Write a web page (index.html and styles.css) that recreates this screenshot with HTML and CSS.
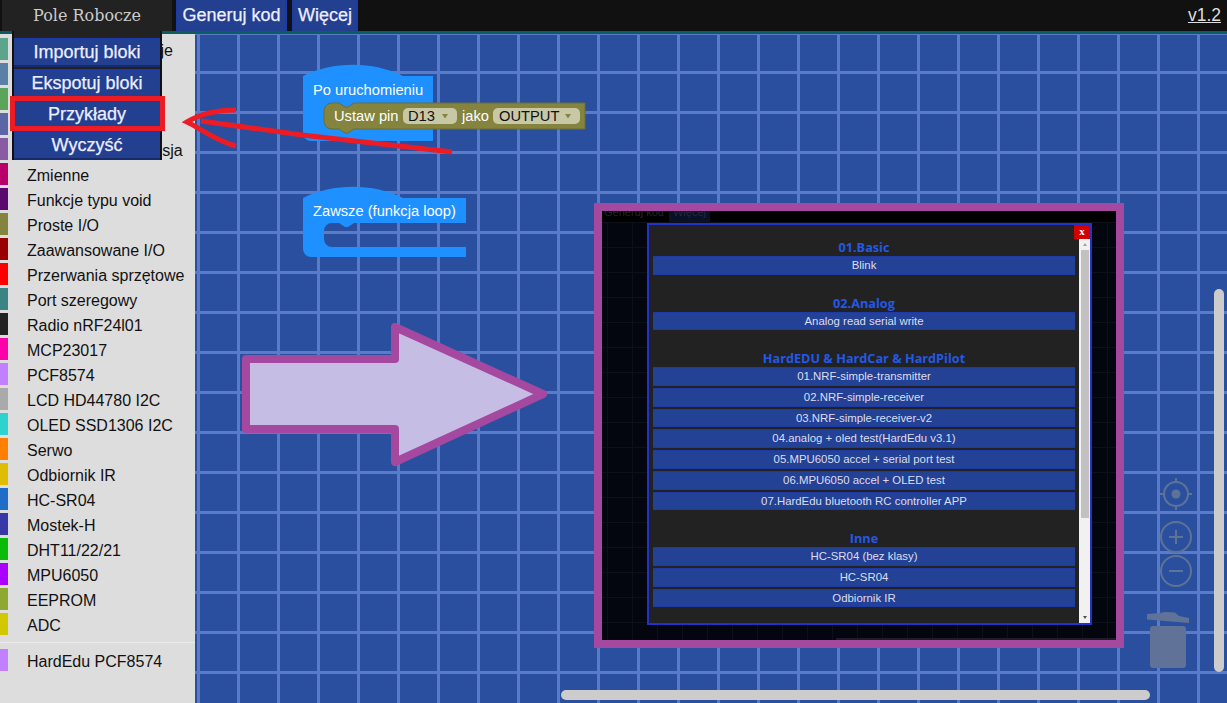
FILE: index.html
```html
<!DOCTYPE html>
<html lang="pl">
<head>
<meta charset="utf-8">
<title>Pole Robocze</title>
<link rel="stylesheet" href="styles.css">
</head>
<body>
<div class="page">
  <header class="topbar">
    <div class="tab-main">Pole Robocze</div>
    <div class="tab">Generuj kod</div>
    <div class="tab tab-more">Więcej</div>
    <a class="version">v1.2</a>
  </header>
  <main class="main">
    <aside class="sidebar">
      <div class="cat"><i class="sw c0"></i>Podstawowe funkcje</div>
      <div class="cat"><i class="sw c1"></i>Logika</div>
      <div class="cat"><i class="sw c2"></i>Pętle</div>
      <div class="cat"><i class="sw c3"></i>Matematyka</div>
      <div class="cat"><i class="sw c4"></i>Łańcuchy i Konwersja</div>
      <div class="cat"><i class="sw c5"></i>Zmienne</div>
      <div class="cat"><i class="sw c6"></i>Funkcje typu void</div>
      <div class="cat"><i class="sw c7"></i>Proste I/O</div>
      <div class="cat"><i class="sw c8"></i>Zaawansowane I/O</div>
      <div class="cat"><i class="sw c9"></i>Przerwania sprzętowe</div>
      <div class="cat"><i class="sw c10"></i>Port szeregowy</div>
      <div class="cat"><i class="sw c11"></i>Radio nRF24l01</div>
      <div class="cat"><i class="sw c12"></i>MCP23017</div>
      <div class="cat"><i class="sw c13"></i>PCF8574</div>
      <div class="cat"><i class="sw c14"></i>LCD HD44780 I2C</div>
      <div class="cat"><i class="sw c15"></i>OLED SSD1306 I2C</div>
      <div class="cat"><i class="sw c16"></i>Serwo</div>
      <div class="cat"><i class="sw c17"></i>Odbiornik IR</div>
      <div class="cat"><i class="sw c18"></i>HC-SR04</div>
      <div class="cat"><i class="sw c19"></i>Mostek-H</div>
      <div class="cat"><i class="sw c20"></i>DHT11/22/21</div>
      <div class="cat"><i class="sw c21"></i>MPU6050</div>
      <div class="cat"><i class="sw c22"></i>EEPROM</div>
      <div class="cat"><i class="sw c23"></i>ADC</div>
      <div class="sep"></div>
      <div class="cat"><i class="sw c13"></i>HardEdu PCF8574</div>
    </aside>
    <section class="workspace"></section>
  </main>

  <nav class="menu">
    <div class="menu-item">Importuj bloki</div>
    <div class="menu-item">Ekspotuj bloki</div>
    <div class="menu-item">Przykłady</div>
    <div class="menu-item">Wyczyść</div>
  </nav>

  <svg class="canvas" width="1227" height="703" viewBox="0 0 1227 703">
    <path class="blk-blue" d="M303 76c30-15 70-15 100 0H433V131H433V141H311a8 8 0 0 1-8-8Z"/>
    <text class="blk-t" x="313" y="95">Po uruchomieniu</text>
    <path class="blk-olive" d="M332 103h7l6 4h3l6-4H585V129H354l-6 4h-3l-6-4h-7a8 8 0 0 1-8-8v-10a8 8 0 0 1 8-8Z"/>
    <text class="blk-t" x="334" y="121">Ustaw pin</text>
    <rect class="fld" x="403" y="108" width="54" height="16" rx="5"/>
    <text class="fld-t" x="408" y="121">D13</text>
    <path class="fld-a" d="M442 114h6l-3 4.5Z"/>
    <text class="blk-t" x="462" y="121">jako</text>
    <rect class="fld" x="493" y="108" width="87" height="16" rx="5"/>
    <text class="fld-t" x="499" y="121">OUTPUT</text>
    <path class="fld-a" d="M565 114h6l-3 4.5Z"/>

    <path class="blk-blue" d="M303 198c30-15 70-15 100 0H466V223H354l-6 4h-3l-6-4h-7a8 8 0 0 0-8 8v8a8 8 0 0 0 8 8H466V257H311a8 8 0 0 1-8-8Z"/>
    <text class="blk-t" x="313" y="216">Zawsze (funkcja loop)</text>

    <g class="ctl">
      <circle cx="1176" cy="494" r="12"/>
      <circle class="ctl-fill" cx="1176" cy="494" r="4.5"/>
      <path d="M1176 478v5M1176 505v5M1160 494h5M1187 494h5"/>
      <circle cx="1176" cy="537" r="15"/>
      <path d="M1176 530v14M1169 537h14"/>
      <circle cx="1176" cy="571" r="15"/>
      <path d="M1169 571h14"/>
    </g>
    <g class="trash">
      <rect x="1150" y="626" width="36" height="42" rx="3"/>
      <path d="M1147 614L1160 613L1165 612L1175 612.5L1179 616L1189 618V623L1147 619.5Z"/>
    </g>

    <path class="arrow-purple" d="M246 359H395V327L543 394 395 462V429H246Z"/>

    <rect class="red-box" x="12.5" y="98.5" width="150" height="30"/>
    <path class="red-line" d="M236 110C215 110 200 114 187 122C200 128 215 141 236 146"/>
    <path class="red-line" d="M201 121L302 135L452 152"/>
  </svg>

  <div class="shot">
    <div class="shot-bar"><span class="ghost">Generuj kod</span><span class="ghost ghost-b">Więcej</span></div>
    <div class="shot-hbar"></div>
    <div class="dialog">
      <div class="dialog-body">
        <h3 class="head">01.Basic</h3>
        <div class="ex">Blink</div>
        <h3 class="head head-s">02.Analog</h3>
        <div class="ex">Analog read serial write</div>
        <h3 class="head head-s">HardEDU &amp; HardCar &amp; HardPilot</h3>
        <div class="ex">01.NRF-simple-transmitter</div>
        <div class="ex">02.NRF-simple-receiver</div>
        <div class="ex">03.NRF-simple-receiver-v2</div>
        <div class="ex">04.analog + oled test(HardEdu v3.1)</div>
        <div class="ex">05.MPU6050 accel + serial port test</div>
        <div class="ex">06.MPU6050 accel + OLED test</div>
        <div class="ex">07.HardEdu bluetooth RC controller APP</div>
        <h3 class="head head-s">Inne</h3>
        <div class="ex">HC-SR04 (bez klasy)</div>
        <div class="ex">HC-SR04</div>
        <div class="ex">Odbiornik IR</div>
      </div>
      <div class="sbar">
        <div class="sbar-up"></div>
        <div class="sbar-thumb"></div>
        <div class="sbar-down"></div>
      </div>
      <div class="close">x</div>
    </div>
  </div>

  <div class="scroll-v"></div>
  <div class="scroll-h"></div>
</div>
</body>
</html>
```

FILE: styles.css
```css
* { box-sizing: border-box; }
html, body { margin: 0; height: 100%; overflow: hidden; }
body { font-family: "Liberation Sans", Arial, sans-serif; background: #2a4f9e; }
.page { position: relative; width: 1227px; height: 703px; display: flex; flex-direction: column; overflow: hidden; }

.topbar { height: 34px; flex: none; display: flex; background: #111; border-bottom: 3px solid #0b5e60; color: #eef; }
.tab-main { width: 170px; margin-left: 2px; background: #222; color: #ccc; font-family: "DejaVu Serif", serif; font-size: 16px; text-align: center; line-height: 31px; }
.tab { margin-left: 4px; width: 111px; background: #223f90; border-left: 2px solid #1c3aa8; border-right: 2px solid #1c3aa8; font-size: 18px; line-height: 30px; text-align: center; -webkit-text-stroke: .25px #eef; }
.tab-more { width: 66px; margin-left: 5px; }
.version { margin-left: auto; margin-right: 6px; color: #ddd; font-size: 17.5px; line-height: 31px; text-decoration: underline; }

.main { flex: 1; display: flex; min-height: 0; }
.sidebar { width: 195px; flex: none; background: #ddd; padding-top: 4px; font-size: 16px; color: #111; }
.cat { height: 25px; display: flex; align-items: flex-start; line-height: 25px; white-space: nowrap; overflow: hidden; }
.sw { width: 8px; height: 22px; margin-right: 19px; flex: none; }
.sep { height: 1px; background: #ebebeb; margin: 4px 0 6px; }
.c0 { background: #5ba58c; } .c1 { background: #5b80a5; } .c2 { background: #5ba55b; } .c3 { background: #5b67a5; }
.c4 { background: #8a5ba5; } .c5 { background: #b8006b; } .c6 { background: #5a0a6e; } .c7 { background: #84843e; }
.c8 { background: #990000; } .c9 { background: #ff0000; } .c10 { background: #3a8583; } .c11 { background: #222; }
.c12 { background: #ff00aa; } .c13 { background: #c080ff; } .c14 { background: #aaa; } .c15 { background: #2ed3cd; }
.c16 { background: #ff8000; } .c17 { background: #dfbd00; } .c18 { background: #1e6ec8; } .c19 { background: #3838a8; }
.c20 { background: #08bc08; } .c21 { background: #aa00ff; } .c22 { background: #8ea832; } .c23 { background: #d2c800; }

.workspace { flex: 1; border-top: 1px solid #5a7cc8; background-color: #2a4f9e;
  background-image: linear-gradient(90deg, transparent 2px, #5a7cc8 2px, #5a7cc8 5px, transparent 5px),
                    linear-gradient(180deg, transparent 36px, #5a7cc8 36px, #5a7cc8 39px, transparent 39px);
  background-size: 40px 40px; }

.menu { position: absolute; left: 12px; top: 31px; width: 150px; height: 129px; background: #222; border: 2px solid #111; border-width: 0 2px 1px; padding-top: 7px; display: flex; flex-direction: column; gap: 2px; }
.menu-item { height: 29px; background: #223f90; border-top: 2px solid #1c3aa8; border-bottom: 2px solid #172a6a; color: #eef; font-size: 18px; line-height: 25px; text-align: center; -webkit-text-stroke: .25px #eef; }

.canvas { position: absolute; left: 0; top: 0; }
.blk-blue { fill: #1e90ff; }
.blk-olive { fill: #84843e; stroke: #6c6c33; stroke-width: 1; }
.blk-t { font-family: "Liberation Sans", sans-serif; font-size: 14.7px; fill: #fff; }
.fld { fill: #c8c8a6; }
.fld-t { font-family: "Liberation Sans", sans-serif; font-size: 14.7px; fill: #111; }
.fld-a { fill: #84843e; }
.ctl { fill: none; stroke: #5f7396; stroke-width: 2; }
.ctl-fill { fill: #5f7396; stroke: none; }
.trash { fill: #617299; }
.arrow-purple { fill: #c6bde4; stroke: #a4499f; stroke-width: 8; stroke-linejoin: round; }
.red-box { fill: none; stroke: #ed1c24; stroke-width: 5; }
.red-line { fill: none; stroke: #ed1c24; stroke-width: 5; }

.shot { position: absolute; left: 594px; top: 203px; width: 530px; height: 445px; border: 8px solid #a4499f; background-color: #03060f; overflow: hidden;
  background-image: linear-gradient(90deg, #0d1018 1px, transparent 1px), linear-gradient(180deg, #0d1018 1px, transparent 1px);
  background-size: 25px 25px; background-position: 5px 11px; }
.shot-bar { height: 11px; background: #000; overflow: hidden; font-size: 11px; line-height: 3px; color: #262626; display: flex; gap: 3px; }
.ghost { padding: 0 2px; }
.ghost-b { background: #0a1025; color: #27293a; padding: 0 4px; }
.shot-hbar { position: absolute; right: 0; bottom: 0; width: 280px; height: 2px; background: #1b1d22; }
.dialog { position: absolute; left: 45px; top: 12px; width: 445px; height: 402px; border: 2px solid #2233cc; background: #222; display: flex; }
.dialog-body { width: 430px; padding: 15px 4px 0; }
.head { margin: 0; height: 16px; font-family: "Open Sans", sans-serif; font-size: 12.7px; font-weight: 700; line-height: 15px; color: #2359e6; text-align: center; }
.head-s { margin-top: 20.75px; }
.ex { height: 18.75px; margin-bottom: 2px; background: #234296; border-top: 1px solid #1f3aa5; border-bottom: 1px solid #1f3aa5; color: #dde; font-size: 11.4px; line-height: 16.5px; text-align: center; }
.sbar { width: 11px; margin-top: 14px; background: #f1f1f1; display: flex; flex-direction: column; align-items: center; padding: 0; }
.sbar-up { width: 0; height: 0; margin-top: 4px; border: 2px solid transparent; border-top: 0; border-bottom: 3px solid #a3a3a3; }
.sbar-thumb { width: 8px; height: 268px; margin-top: 4px; background: #c1c1c1; }
.sbar-down { width: 0; height: 0; margin-top: auto; margin-bottom: 4px; border: 2px solid transparent; border-bottom: 0; border-top: 3px solid #505050; }
.close { position: absolute; right: 0; top: 0; width: 16px; height: 14px; background: #d40000; color: #fff; font-family: "Liberation Serif", serif; font-size: 11px; font-weight: 700; line-height: 13px; text-align: center; }

.scroll-v { position: absolute; left: 1214px; top: 289px; width: 10px; height: 383px; border-radius: 5px; background: #ccc; }
.scroll-h { position: absolute; left: 561px; top: 690px; width: 589px; height: 10px; border-radius: 5px; background: #ccc; }
```
